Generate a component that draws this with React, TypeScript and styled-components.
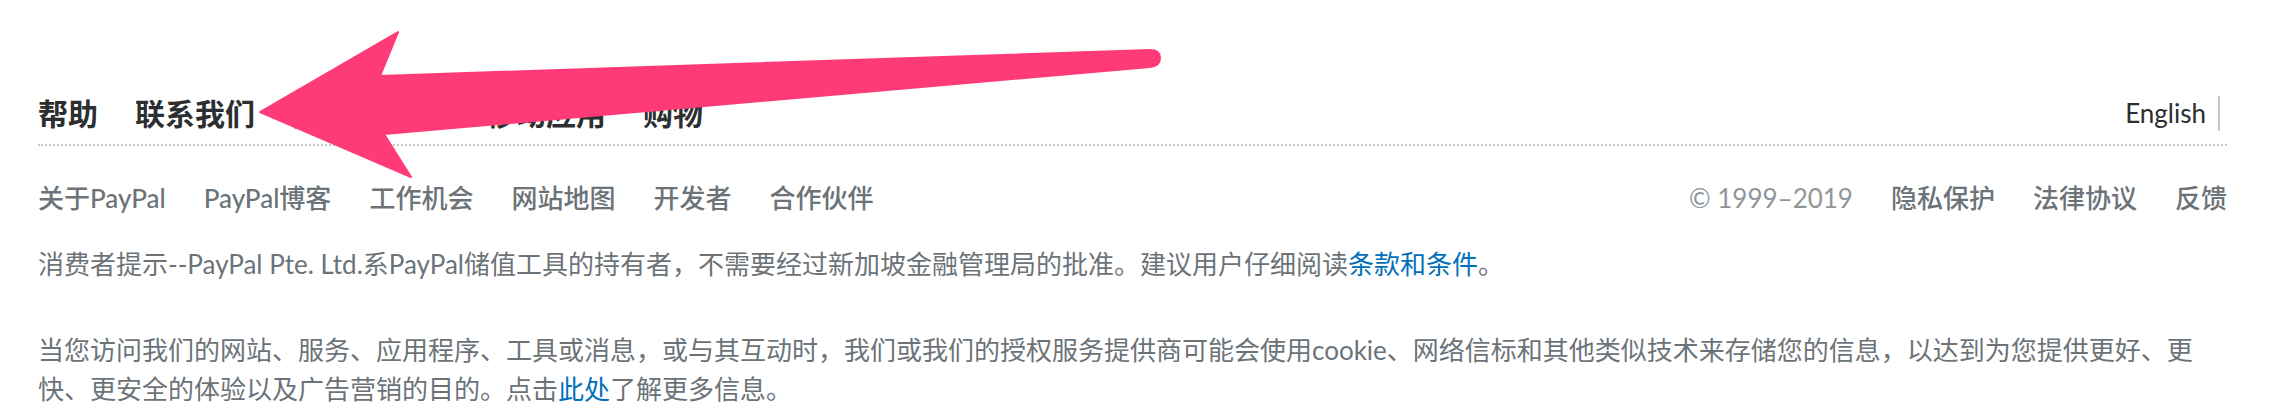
import React from "react";
import styled, { createGlobalStyle } from "styled-components";

const GlobalStyle = createGlobalStyle`
  html, body {
    margin: 0;
    padding: 0;
    background: #ffffff;
  }
  body {
    font-family: Lato, "Noto Sans CJK SC", "Noto Sans", sans-serif;
    -webkit-font-smoothing: antialiased;
  }
`;

const Footer = styled.footer`
  position: relative;
  padding: 0 51px 0 38px;
`;

const TopBar = styled.div`
  display: flex;
  align-items: center;
  justify-content: space-between;
  padding-top: 90px;
  padding-bottom: 8px;
  border-bottom: 2px dotted #c4c7c9;
`;

const LinkGroup = styled.nav<{ $gap: number }>`
  display: flex;
  align-items: center;
  gap: ${(p) => p.$gap}px;
`;

const MainLink = styled.a`
  font-size: 30px;
  font-weight: 700;
  line-height: 46px;
  color: #2c2e2f;
  text-decoration: none;
  white-space: nowrap;
`;

const LangButton = styled.a`
  font-size: 26px;
  line-height: 35px;
  color: #2c2e2f;
  text-decoration: none;
  padding-right: 12px;
  margin-right: 7px;
  border-right: 2px solid #c4c7c9;
`;

const SecondaryBar = styled.div`
  display: flex;
  align-items: center;
  justify-content: space-between;
  margin-top: 33px;
`;

const SecondaryLink = styled.a`
  font-size: 26px;
  line-height: 39px;
  font-weight: 500;
  color: #6c7378;
  text-decoration: none;
  white-space: nowrap;
`;

const Copyright = styled.span`
  font-size: 26px;
  line-height: 39px;
  color: #8f969b;
  white-space: nowrap;
`;

const Notice = styled.p<{ $gap: number }>`
  margin: ${(p) => p.$gap}px 0 0;
  font-size: 26px;
  line-height: 39px;
  color: #6c7378;
`;

const InlineLink = styled.a`
  color: #0070ba;
  text-decoration: none;
`;

const Annotation = styled.svg`
  position: absolute;
  left: 0;
  top: 0;
  width: 1180px;
  height: 200px;
  pointer-events: none;
`;

const mainLinks = ["帮助", "联系我们", "费用", "安全", "移动应用", "购物"];
const secondaryLinks = ["关于PayPal", "PayPal博客", "工作机会", "网站地图", "开发者", "合作伙伴"];
const legalLinks = ["隐私保护", "法律协议", "反馈"];

export default function App() {
  return (
    <>
      <GlobalStyle />
      <Footer>
        <TopBar>
          <LinkGroup $gap={37}>
            {mainLinks.map((l) => (
              <MainLink key={l} href="#">
                {l}
              </MainLink>
            ))}
          </LinkGroup>
          <LangButton href="#">English</LangButton>
        </TopBar>
        <SecondaryBar>
          <LinkGroup $gap={38}>
            {secondaryLinks.map((l) => (
              <SecondaryLink key={l} href="#">
                {l}
              </SecondaryLink>
            ))}
          </LinkGroup>
          <LinkGroup $gap={38}>
            <Copyright>© 1999–2019</Copyright>
            {legalLinks.map((l) => (
              <SecondaryLink key={l} href="#">
                {l}
              </SecondaryLink>
            ))}
          </LinkGroup>
        </SecondaryBar>
        <Notice $gap={27}>
          消费者提示--PayPal Pte. Ltd.系PayPal储值工具的持有者，不需要经过新加坡金融管理局的批准。建议用户仔细阅读
          <InlineLink href="#">条款和条件</InlineLink>。
        </Notice>
        <Notice $gap={47}>
          当您访问我们的网站、服务、应用程序、工具或消息，或与其互动时，我们或我们的授权服务提供商可能会使用cookie、网络信标和其他类似技术来存储您的信息，以达到为您提供更好、更快、更安全的体验以及广告营销的目的。点击
          <InlineLink href="#">此处</InlineLink>了解更多信息。
        </Notice>
        <Annotation viewBox="0 0 1180 200">
          <path
            d="M260 112 L398 32 L380 76 L1150 50 Q1160 50 1160 58 Q1160 66 1150 67 L384 134 L411 177 Z"
            fill="#ff3b77"
            stroke="#ff3b77"
            strokeWidth="2"
            strokeLinejoin="round"
          />
        </Annotation>
      </Footer>
    </>
  );
}
